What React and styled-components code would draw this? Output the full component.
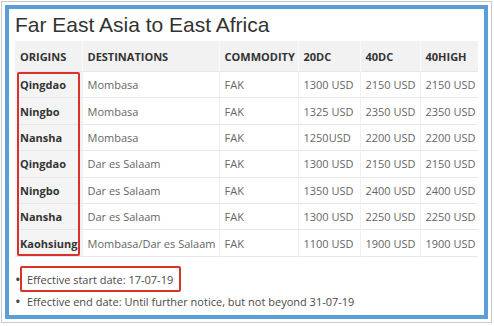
import React from "react";
import styled, { createGlobalStyle } from "styled-components";

const GlobalStyle = createGlobalStyle`
  html, body {
    margin: 0;
    padding: 0;
    background: #ffffff;
  }
`;

const Frame = styled.div`
  box-sizing: border-box;
  width: 491px;
  height: 322px;
  margin: 1px 0 0 1px;
  border: 1px solid #c9c9c9;
  padding: 3px;
  background: #fff;
`;

const Panel = styled.div`
  box-sizing: border-box;
  height: 100%;
  border: 4px solid #5c9fd8;
  padding: 0 5px 0 6px;
  background: #fff;
`;

const Title = styled.h2`
  margin: 0;
  padding-top: 3px;
  height: 29px;
  font-family: "Liberation Sans", Arial, sans-serif;
  font-weight: 400;
  font-size: 21px;
  line-height: 26px;
  color: #333;
`;

const TableWrap = styled.div`
  position: relative;
  width: 463px;
`;

const Table = styled.table`
  width: 463px;
  border-collapse: collapse;
  table-layout: fixed;
  font-family: "Open Sans", "Noto Sans", sans-serif;
  font-size: 11px;
`;

const Th = styled.th`
  height: 30px;
  padding: 0 5px;
  text-align: left;
  font-weight: 700;
  color: #333;
  background: #f2f2f2;
  border-left: 1px solid #fafafa;
  white-space: nowrap;
  &:first-child { border-left: none; }
`;

const Td = styled.td`
  height: 25.4px;
  padding: 0 5px;
  border-top: 1px solid #e7e7e7;
  border-left: 1px solid #f0f0f0;
  color: ${({ $strong }) => ($strong ? "#333" : "#666")};
  font-weight: ${({ $strong }) => ($strong ? 700 : 400)};
  background: ${({ $strong }) => ($strong ? "#f4f4f4" : "#fff")};
  white-space: nowrap;
  &:first-child { border-left: none; }
`;

const BottomRule = styled.tr`
  td {
    height: 0;
    padding: 0;
    border-top: 1px solid #e7e7e7;
  }
`;

const Highlight = styled.div`
  position: absolute;
  left: 2px;
  top: 31px;
  width: 63px;
  height: 184px;
  box-sizing: border-box;
  border: 2px solid #d8322b;
  border-radius: 2px;
`;

const Notes = styled.ul`
  margin: 9px 0 0 0;
  padding: 0;
  list-style: none;
  font-family: "Open Sans", "Noto Sans", sans-serif;
  font-size: 11px;
  color: #4a4a4a;
`;

const Note = styled.li`
  display: flex;
  align-items: center;
  height: ${({ $boxed }) => ($boxed ? "27px" : "18px")};
  &::before {
    content: "•";
    width: 5px;
    margin-right: ${({ $boxed }) => ($boxed ? "0" : "7px")};
    font-size: 15px;
    line-height: 1;
    color: #444;
  }
`;

const Boxed = styled.span`
  display: inline-flex;
  align-items: center;
  height: 26px;
  box-sizing: border-box;
  padding: 0 6px 0 5px;
  border: 2px solid #d8322b;
  border-radius: 2px;
`;

const headers = ["ORIGINS", "DESTINATIONS", "COMMODITY", "20DC", "40DC", "40HIGH"];
const widths = [67, 137, 79, 62, 60, 58];

const rows = [
  ["Qingdao", "Mombasa", "FAK", "1300 USD", "2150 USD", "2150 USD"],
  ["Ningbo", "Mombasa", "FAK", "1325 USD", "2350 USD", "2350 USD"],
  ["Nansha", "Mombasa", "FAK", "1250USD", "2200 USD", "2200 USD"],
  ["Qingdao", "Dar es Salaam", "FAK", "1300 USD", "2150 USD", "2150 USD"],
  ["Ningbo", "Dar es Salaam", "FAK", "1350 USD", "2400 USD", "2400 USD"],
  ["Nansha", "Dar es Salaam", "FAK", "1300 USD", "2250 USD", "2250 USD"],
  ["Kaohsiung", "Mombasa/Dar es Salaam", "FAK", "1100 USD", "1900 USD", "1900 USD"],
];

export default function App() {
  return (
    <>
      <GlobalStyle />
      <Frame>
        <Panel>
          <Title>Far East Asia to East Africa</Title>

          <TableWrap>
            <Table>
              <colgroup>
                {widths.map((w, i) => (
                  <col key={i} style={{ width: w }} />
                ))}
              </colgroup>
              <thead>
                <tr>
                  {headers.map((h) => (
                    <Th key={h}>{h}</Th>
                  ))}
                </tr>
              </thead>
              <tbody>
                {rows.map((r, i) => (
                  <tr key={i}>
                    {r.map((c, j) => (
                      <Td key={j} $strong={j === 0}>{c}</Td>
                    ))}
                  </tr>
                ))}
                <BottomRule>
                  <td colSpan={6} />
                </BottomRule>
              </tbody>
            </Table>
            <Highlight />
          </TableWrap>

          <Notes>
            <Note $boxed>
              <Boxed>Effective start date: 17-07-19</Boxed>
            </Note>
            <Note>Effective end date: Until further notice, but not beyond 31-07-19</Note>
          </Notes>
        </Panel>
      </Frame>
    </>
  );
}
